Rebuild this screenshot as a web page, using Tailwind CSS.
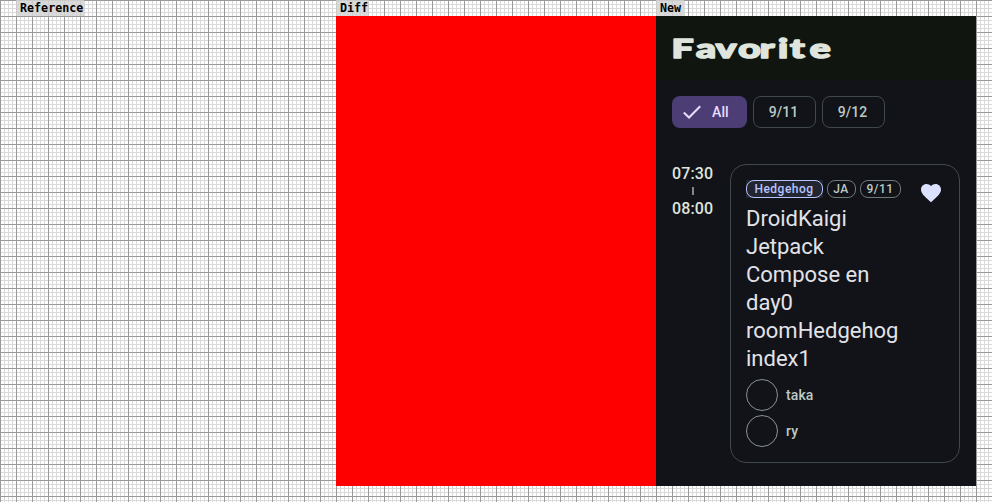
<!DOCTYPE html>
<html lang="en">
<head>
<meta charset="utf-8">
<title>Favorite</title>
<script src="https://cdn.jsdelivr.net/npm/@tailwindcss/browser@4"></script>
</head>
<body class="h-[502px] w-[992px] overflow-hidden bg-white font-[Roboto,sans-serif]">
<div class="relative h-[502px] w-[992px] overflow-hidden">
  <svg class="absolute inset-0" width="992" height="502" shape-rendering="crispEdges">
    <defs>
      <pattern id="minor" width="4" height="4" patternUnits="userSpaceOnUse"><path d="M0 0h4v1H0zM0 0h1v4H0z" fill="#000" fill-opacity=".15"/></pattern>
      <pattern id="major" width="16" height="16" patternUnits="userSpaceOnUse"><path d="M0 0h16v1H1v15H0z" fill="#999"/></pattern>
    </defs>
    <rect width="992" height="502" fill="url(#minor)"/>
    <rect width="992" height="502" fill="url(#major)"/>
  </svg>
  <main class="relative flex pl-4">
    <section class="w-80"><div class="h-4 w-[68px] bg-[#d3d3d3]/85 pl-1 font-['DejaVu_Sans_Mono',monospace] text-[11.7px] leading-4 font-bold text-black">Reference</div></section>
    <section class="w-80">
      <div class="h-4 w-[33px] bg-[#d3d3d3]/85 pl-1 font-['DejaVu_Sans_Mono',monospace] text-[11.7px] leading-4 font-bold text-black">Diff</div>
      <div class="h-[470px] bg-[#ff0000]"></div>
    </section>
    <section class="w-80">
      <div class="h-4 w-[28px] bg-[#d3d3d3]/85 pl-1 font-['DejaVu_Sans_Mono',monospace] text-[11.7px] leading-4 font-bold text-black">New</div>
      <div class="h-[470px] bg-[#111318]">
        <header class="h-16 bg-[#10150f]">
          <svg width="320" height="64"><text transform="scale(1.5 1)" x="10.4 26.6 39.8 54.9 69.2 81.4 89.4 102.5" y="42.5" font-family="Lato, sans-serif" font-weight="900" font-size="26" fill="#dfe4dd" stroke="#dfe4dd" stroke-width="1.5" stroke-linejoin="round">Favorite</text></svg>
        </header>
        <div class="flex gap-1.5 px-4 pt-4 text-sm leading-8 font-medium tracking-[0.1px] text-[#bec9c6]">
          <div class="flex h-8 w-[75px] items-center rounded-lg bg-[#4c3e75] pl-[11px] text-[#e9ddff]">
            <svg class="mr-[11px]" width="18" height="18" viewBox="0 0 18 18" fill="none"><path d="M.8 9.6 6 14.5 17.2 3.2" stroke="#e9ddff" stroke-width="2"/></svg>All
          </div>
          <div class="flex h-8 w-[63px] items-center justify-center rounded-lg border border-[#3f4947] pr-0.5">9/11</div>
          <div class="flex h-8 w-[63px] items-center justify-center rounded-lg border border-[#3f4947] pr-0.5">9/12</div>
        </div>
        <div class="flex px-4 pt-9">
          <div class="w-[58px] pt-px text-base leading-[18px] font-medium tracking-[0.15px] text-[#dfe4dd]">
            <div>07:30</div>
            <div class="my-1 ml-5 h-2 w-0.5 bg-[#7c8985]"></div>
            <div class="pt-px">08:00</div>
          </div>
          <article class="h-[299px] w-[230px] rounded-2xl border border-[#3f4947] pt-[15px] pl-[15px]">
            <div class="flex h-[18px] gap-1 text-xs leading-4 font-medium tracking-[0.5px] text-[#bec9c6]">
              <div class="w-[77px] bg-[#222630]"><div class="h-[18px] rounded-lg border border-[#b9c3ff] pr-px text-center text-[#b9c3ff]">Hedgehog</div></div>
              <div class="w-[29px] rounded-lg border border-[#6f7977] pr-px text-center">JA</div>
              <div class="w-[41px] rounded-lg border border-[#6f7977] pr-px text-center">9/11</div>
              <svg class="mt-[1px] ml-[14px] shrink-0" width="24" height="24" viewBox="0 0 24 24"><path fill="#dbe1ff" d="M12 21.35l-1.45-1.32C5.4 15.36 2 12.28 2 8.5 2 5.42 4.42 3 7.5 3c1.74 0 3.41.81 4.5 2.09C13.09 3.81 14.76 3 16.5 3 19.58 3 22 5.42 22 8.5c0 3.78-3.4 6.86-8.55 11.54L12 21.35z"/></svg>
            </div>
            <h2 class="mt-[7px] text-[22px] leading-7 font-normal text-[#e2e2e9]">DroidKaigi<br>Jetpack<br>Compose en<br>day0<br>roomHedgehog<br>index1</h2>
            <div class="mt-1.5 flex flex-col gap-1 text-sm font-medium tracking-[0.1px] text-[#bec9c6]">
              <div class="flex items-center gap-2"><span class="h-8 w-8 rounded-full border border-[#89938f]"></span>taka</div>
              <div class="flex items-center gap-2"><span class="h-8 w-8 rounded-full border border-[#89938f]"></span>ry</div>
            </div>
          </article>
        </div>
      </div>
    </section>
  </main>
</div>
</body>
</html>
